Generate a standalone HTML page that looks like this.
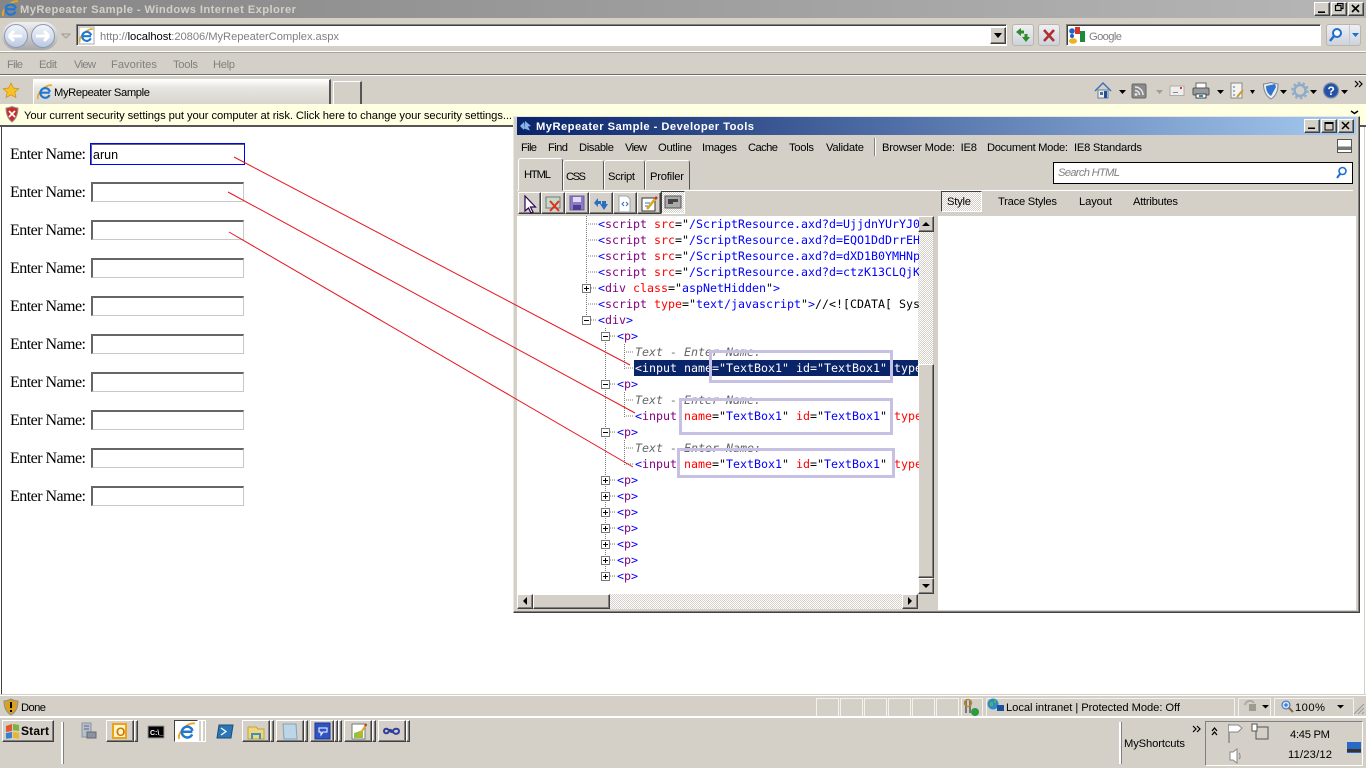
<!DOCTYPE html>
<html><head><meta charset="utf-8"><title>MyRepeater Sample</title>
<style>
html,body{margin:0;padding:0;width:1366px;height:768px;overflow:hidden;background:#d4d0c8}
div{position:absolute;box-sizing:border-box}
.up{background:#d4d0c8;border:1px solid;border-color:#fff #404040 #404040 #fff;box-shadow:inset -1px -1px 0 #808080}
.in{background:#fff;border:1px solid;border-color:#808080 #fff #fff #808080;box-shadow:inset 1px 1px 0 #404040}
.tb{border-radius:3px;border:1px solid #b9b6ae;background:linear-gradient(#eef0f3,#cdd3dc)}
.ip{background:#fff;border-style:solid;border-width:2px 1px 1px 2px;border-color:#666 #c8c8c8 #c8c8c8 #666;left:91px;width:153px;height:20px}
.dith{background-color:#fff;background-image:conic-gradient(#d4d0c8 25%,transparent 0 50%,#d4d0c8 0 75%,transparent 0);background-size:2px 2px}
.sb{border:1px solid #f4f2ee;height:20px;top:698px;width:23px}
svg{position:absolute;left:0;top:0}
text{font-family:"Liberation Sans",sans-serif;font-size:11.2px;fill:#000;white-space:pre}
.g{fill:#808080}
.m{font-family:"DejaVu Sans Mono",monospace;font-size:11.63px}
.s{font-family:"Liberation Serif",serif;font-size:16px}
.bl{fill:#00f}.pu{fill:#800080}.r{fill:#f00}
</style></head><body>

<!-- IE title bar -->
<div style="left:0;top:0;width:1366px;height:18px;background:linear-gradient(90deg,#868686,#b6b6b6)"></div>
<div class="up" style="left:1314px;top:2px;width:16px;height:14px"></div>
<div class="up" style="left:1331px;top:2px;width:16px;height:14px"></div>
<div class="up" style="left:1348px;top:2px;width:16px;height:14px"></div>

<!-- Nav row -->
<div style="left:2px;top:22px;width:56px;height:28px;border-radius:14px;background:linear-gradient(#f0f0f0,#a8a8a8)"></div>
<div style="left:4px;top:24px;width:24px;height:24px;border-radius:12px;background:linear-gradient(#f2f5fb,#bcc9e2);border:1px solid #8d9ab4"></div>
<div style="left:31px;top:24px;width:24px;height:24px;border-radius:12px;background:linear-gradient(#f2f5fb,#bcc9e2);border:1px solid #8d9ab4"></div>
<div class="in" style="left:76px;top:24px;width:931px;height:22px"></div>
<div class="up" style="left:990px;top:27px;width:16px;height:17px"></div>
<div class="tb" style="left:1012px;top:24px;width:22px;height:22px"></div>
<div class="tb" style="left:1038px;top:24px;width:22px;height:22px"></div>
<div class="in" style="left:1066px;top:24px;width:255px;height:22px"></div>
<div class="tb" style="left:1326px;top:24px;width:35px;height:22px"></div>
<div style="left:1349px;top:25px;width:1px;height:20px;background:#c3c7cf"></div>
<div style="left:0;top:51px;width:1366px;height:2px;background:linear-gradient(#fff 50%,#a8a59e 50%)"></div>

<!-- Menu -->
<div style="left:0;top:74px;width:1366px;height:2px;background:linear-gradient(#6f6f6f 50%,#fff 50%)"></div>

<!-- Tabs -->
<div style="left:33px;top:79px;width:298px;height:25px;background:linear-gradient(#fff,#e8e6e1 30%,#d8d5ce);border-top:1px solid #fff;border-left:1px solid #fff;border-right:2px solid #555"></div>
<div style="left:333px;top:81px;width:29px;height:23px;border-top:1px solid #fff;border-left:1px solid #fff;border-right:2px solid #555"></div>

<!-- Info bar -->
<div style="left:0;top:104px;width:1366px;height:21px;background:#ffffe1"></div>
<div style="left:0;top:125px;width:1366px;height:2px;background:#555"></div>

<!-- Page -->
<div style="left:0;top:127px;width:1366px;height:567px;background:#fff"></div>
<div style="left:1px;top:127px;width:1px;height:567px;background:#404040"></div>
<div style="left:1364px;top:127px;width:1px;height:567px;background:#d4d0c8"></div>
<div class="ip" style="left:90px;top:143px;width:155px;height:22px;border:1px solid #00f;box-shadow:inset 1px 1px 0 #666"></div>
<div class="ip" style="top:182px"></div>
<div class="ip" style="top:220px"></div>
<div class="ip" style="top:258px"></div>
<div class="ip" style="top:296px"></div>
<div class="ip" style="top:334px"></div>
<div class="ip" style="top:372px"></div>
<div class="ip" style="top:410px"></div>
<div class="ip" style="top:448px"></div>
<div class="ip" style="top:486px"></div>

<!-- Status -->
<div style="left:0;top:694px;width:1366px;height:3px;background:linear-gradient(#d4d0c8 33%,#fff 33% 66%,#d4d0c8 66%)"></div>
<div class="sb" style="left:816px"></div><div class="sb" style="left:840px"></div><div class="sb" style="left:864px"></div><div class="sb" style="left:888px"></div><div class="sb" style="left:912px"></div><div class="sb" style="left:936px"></div>
<div class="sb" style="left:961px;width:22px"></div>
<div class="sb" style="left:986px;width:249px"></div>
<div class="sb" style="left:1238px;width:33px"></div>
<div class="sb" style="left:1274px;width:80px"></div>
<div style="left:0;top:716px;width:1366px;height:2px;background:#fff"></div>

<!-- Taskbar -->
<div class="up" style="left:2px;top:720px;width:52px;height:22px"></div>
<div style="left:61px;top:722px;width:3px;height:42px;background:#fff;border-right:1px solid #808080"></div>
<div class="up" style="left:106px;top:720px;width:28px;height:22px"></div><div class="up" style="left:134px;top:720px;width:4px;height:22px"></div>
<div style="left:174px;top:720px;width:24px;height:22px;background:#fff;border:1px solid;border-color:#404040 #fff #fff #404040"></div>
<div style="left:198px;top:720px;width:4px;height:22px;border:1px solid #fff"></div><div style="left:202px;top:720px;width:4px;height:22px;border:1px solid #fff"></div>
<div class="up" style="left:242px;top:720px;width:28px;height:22px"></div><div class="up" style="left:270px;top:720px;width:4px;height:22px"></div>
<div class="up" style="left:276px;top:720px;width:28px;height:22px"></div><div class="up" style="left:304px;top:720px;width:4px;height:22px"></div>
<div class="up" style="left:310px;top:720px;width:24px;height:22px"></div><div class="up" style="left:334px;top:720px;width:4px;height:22px"></div><div class="up" style="left:338px;top:720px;width:4px;height:22px"></div>
<div class="up" style="left:344px;top:720px;width:28px;height:22px"></div><div class="up" style="left:372px;top:720px;width:4px;height:22px"></div>
<div class="up" style="left:378px;top:720px;width:28px;height:22px"></div><div class="up" style="left:406px;top:720px;width:4px;height:22px"></div>
<div style="left:1119px;top:722px;width:3px;height:42px;background:#fff;border-right:1px solid #808080"></div>
<div style="left:1205px;top:721px;width:158px;height:45px;border:1px solid;border-color:#808080 #fff #fff #808080"></div>

<!-- Developer Tools window -->
<div style="left:513px;top:116px;width:847px;height:497px;background:#d4d0c8;border:1px solid;border-color:#e8e6e1 #404040 #404040 #e8e6e1;box-shadow:inset -1px -1px 0 #808080"></div>
<div style="left:517px;top:117px;width:839px;height:18px;background:linear-gradient(90deg,#0a246a,#a6caf0)"></div>
<div class="up" style="left:1304px;top:119px;width:16px;height:14px"></div>
<div class="up" style="left:1321px;top:119px;width:16px;height:14px"></div>
<div class="up" style="left:1338px;top:119px;width:16px;height:14px"></div>
<div style="left:874px;top:138px;width:2px;height:18px;background:linear-gradient(90deg,#808080 50%,#fff 50%)"></div>
<div style="left:1337px;top:139px;width:15px;height:14px;border:1px solid #555;background:linear-gradient(#fff 55%,#777 55%,#777 85%,#fff 85%)"></div>

<div style="left:517px;top:190px;width:422px;height:1px;background:#fff"></div>
<div style="left:939px;top:190px;width:414px;height:1px;background:#fff"></div>
<div style="left:518px;top:158px;width:45px;height:33px;background:#d4d0c8;border:1px solid;border-color:#fff #555 #d4d0c8 #fff;border-radius:3px 3px 0 0"></div>
<div style="left:563px;top:160px;width:41px;height:30px;border:1px solid;border-color:#fff #555 #d4d0c8 #fff;border-radius:3px 3px 0 0"></div>
<div style="left:604px;top:160px;width:41px;height:30px;border:1px solid;border-color:#fff #555 #d4d0c8 #fff;border-radius:3px 3px 0 0"></div>
<div style="left:645px;top:160px;width:45px;height:30px;border:1px solid;border-color:#fff #555 #d4d0c8 #fff;border-radius:3px 3px 0 0"></div>
<div style="left:1053px;top:162px;width:300px;height:22px;background:#fff;border:1px solid #000"></div>

<div class="up" style="left:518px;top:192px;width:23px;height:22px"></div>
<div class="up" style="left:541px;top:192px;width:24px;height:22px"></div>
<div class="up" style="left:565px;top:192px;width:24px;height:22px"></div>
<div class="up" style="left:589px;top:192px;width:24px;height:22px"></div>
<div class="up" style="left:613px;top:192px;width:24px;height:22px"></div>
<div class="up" style="left:637px;top:192px;width:24px;height:22px"></div>
<div class="dith" style="left:661px;top:191px;width:24px;height:23px;border:1px solid;border-color:#404040 #fff #fff #404040"></div>

<div class="dith" style="left:941px;top:191px;width:41px;height:21px;border:1px solid;border-color:#404040 #fff #fff #404040"></div>

<div style="left:517px;top:216px;width:402px;height:378px;background:#fff"></div>
<div style="left:938px;top:216px;width:418px;height:394px;background:#fff"></div>

<div style="left:634px;top:360px;width:284px;height:16px;background:#0a246a"></div>

<!-- Scrollbars -->
<div class="dith" style="left:918px;top:232px;width:15px;height:346px"></div>
<div class="up" style="left:918px;top:216px;width:16px;height:16px"></div>
<div class="up" style="left:918px;top:364px;width:16px;height:214px"></div>
<div class="up" style="left:918px;top:578px;width:16px;height:16px"></div>
<div class="dith" style="left:517px;top:594px;width:401px;height:15px"></div>
<div class="up" style="left:517px;top:594px;width:16px;height:15px"></div>
<div class="up" style="left:533px;top:594px;width:77px;height:15px"></div>
<div class="up" style="left:902px;top:594px;width:16px;height:15px"></div>

<svg width="1366" height="768" viewBox="0 0 1366 768">
<defs>
<symbol id="ie" viewBox="0 0 16 16">
<path d="M1.500 14.800C-.5 14 1.500 9 5 5.500S13 .5 15 1.500" fill="none" stroke="#efa81a" stroke-width="1.700"/>
<path d="M4.500 8.700h8.300M12.600 11a4.800 4.800 0 1 1 .3-3.200" fill="none" stroke="#2178d4" stroke-width="2.200"/>
</symbol>
<symbol id="plus" viewBox="0 0 9 9"><rect x=".5" y=".5" width="8" height="8" fill="#fff" stroke="#777"/><path d="M2 4.500h5M4.500 2v5" stroke="#000"/></symbol>
<symbol id="minus" viewBox="0 0 9 9"><rect x=".5" y=".5" width="8" height="8" fill="#fff" stroke="#777"/><path d="M2 4.500h5" stroke="#000"/></symbol>
<clipPath id="cl"><rect x="517" y="216" width="402" height="378"/></clipPath>
</defs>

<!-- IE titlebar -->
<use href="#ie" x="2" y="0" width="17" height="17"/>
<text x="20" y="13" font-weight="bold" textLength="276" style="fill:#d4d0c8">MyRepeater Sample - Windows Internet Explorer</text>
<path d="M1318 13h7v-1.600h-7z" fill="#000"/>
<path d="M1335.500 5.500h5.500v5h-5.500zM1337.500 5.500v-2h5.500v5h-2" fill="none" stroke="#000" stroke-width="1.200"/>
<path d="M1352 5l7 7M1359 5l-7 7" stroke="#000" stroke-width="1.600"/>

<!-- Back / forward -->
<path d="M9 36h13M9 36l5-5M9 36l5 5" stroke="#fff" stroke-width="3" fill="none"/>
<path d="M36 36h13M49 36l-5-5M49 36l-5 5" stroke="#fff" stroke-width="3" fill="none"/>
<path d="M62 34h8l-4 4z" fill="#d4d0c8" stroke="#a09c94"/>
<rect x="79" y="27" width="15" height="17" fill="#fff" stroke="#aaa"/>
<use href="#ie" x="79" y="28" width="15" height="15"/>
<text x="100" y="40" class="g" textLength="239"><tspan class="g">http://</tspan><tspan style="fill:#000">localhost</tspan><tspan class="g">:20806/MyRepeaterComplex.aspx</tspan></text>
<path d="M994 33h8l-4 5z" fill="#000"/>
<path d="M1016 32l5-4v2.500h3v3h-3v2.500zM1030 37l-4 5-4-5h2.500v-3h3v3z" fill="#2f8a2a"/>
<path d="M1044 30l10 11M1054 30l-10 11" stroke="#b03030" stroke-width="2.600"/>
<rect x="1068" y="27" width="18" height="18" fill="#fff"/>
<circle cx="1072" cy="31" r="2.800" fill="#1f63c9"/><rect x="1075" y="27" width="5" height="7" fill="#d8322b"/><rect x="1080" y="31" width="5" height="11" fill="#1b8a3a"/><ellipse cx="1073" cy="41" rx="4" ry="2.800" fill="#eeb221"/><circle cx="1072" cy="36" r="2" fill="#1f63c9"/>
<text x="1089" y="40" class="g" textLength="33">Google</text>
<circle cx="1337" cy="33" r="4" fill="#fff" stroke="#1c6fd1" stroke-width="2"/><path d="M1334 36l-4 5" stroke="#1c6fd1" stroke-width="2.400"/>
<path d="M1352 33h7l-3.500 4z" fill="#1c6fd1"/>

<!-- Menu -->
<text x="7" y="68" class="g" textLength="16">File</text><text x="39" y="68" class="g" textLength="18">Edit</text><text x="74" y="68" class="g" textLength="22">View</text><text x="111" y="68" class="g" textLength="46">Favorites</text><text x="173" y="68" class="g" textLength="25">Tools</text><text x="213" y="68" class="g" textLength="22">Help</text>

<!-- Tab row -->
<path d="M11 83l2.400 5 5.400.600-4 3.600 1.200 5.400-5-2.800-5 2.800 1.200-5.400-4-3.600 5.400-.6z" fill="#f7c326" stroke="#c98f14" stroke-width=".7"/>
<use href="#ie" x="37" y="84" width="16" height="16"/>
<text x="54" y="96" textLength="96">MyRepeater Sample</text>

<!-- Right toolbar icons -->
<path d="M1095 91l8-8 8 8" fill="none" stroke="#3a6fb8" stroke-width="1.400"/><path d="M1098 90h10v8h-10z" fill="#f0efe8" stroke="#6b7b94"/><rect x="1100" y="92" width="3" height="3" fill="#3a6fb8"/><rect x="1104" y="91" width="3" height="7" fill="#1f4f98"/>
<path d="M1119 90h7l-3.500 4z" fill="#000"/>
<rect x="1132" y="84" width="14" height="14" rx="1.500" fill="#8a8a8a" stroke="#666"/><path d="M1135 87a8 8 0 0 1 8 8M1135 90.500a4.500 4.500 0 0 1 4.500 4.500" stroke="#e8e8e8" stroke-width="1.500" fill="none"/><circle cx="1136" cy="94.500" r="1.400" fill="#e8e8e8"/>
<path d="M1156 90h7l-3.500 4z" fill="#a09c94"/>
<rect x="1170" y="86" width="14" height="9.500" fill="#eee" stroke="#b0aca4"/><path d="M1173 92.500h5" stroke="#888"/><rect x="1180" y="87" width="2" height="2" fill="#d33"/>
<rect x="1196" y="83" width="10" height="6" fill="#fff" stroke="#666"/><rect x="1193" y="88" width="16" height="7" rx="1" fill="#9a9a9a" stroke="#555"/><rect x="1196" y="94" width="10" height="4" fill="#fff" stroke="#444"/><rect x="1199" y="95" width="4" height="2" fill="#2a8ab0"/>
<path d="M1217 90h7l-3.500 4z" fill="#000"/>
<rect x="1231" y="83" width="11" height="15" fill="#f4f3ee" stroke="#8a8a8a"/><path d="M1233 87h2M1233 91h2M1233 95h2" stroke="#3a6fb8"/><path d="M1237 97l6-7" stroke="#c99a2e" stroke-width="2"/>
<path d="M1250 90h5l-2.500 4z" fill="#000"/>
<path d="M1263.500 84c3 0 5-1 7.500-1.500 2.500.5 4.500 1.500 7 1.500 0 7-2 12-7 15-5-3-7.500-8-7.500-15z" fill="#eee" stroke="#7d8794"/><path d="M1266 86l9-2 1 3-5 9c-3-2-5-5-5-10z" fill="#2f74cf"/>
<path d="M1280 90h7l-3.500 4z" fill="#000"/>
<circle cx="1300" cy="90.500" r="5.500" fill="none" stroke="#8eabc8" stroke-width="2.500"/><circle cx="1300" cy="90.500" r="7.800" fill="none" stroke="#8eabc8" stroke-width="2" stroke-dasharray="2.500 2.400"/>
<path d="M1310 90h7l-3.500 4z" fill="#000"/>
<circle cx="1331" cy="90.500" r="7.500" fill="#2452a8" stroke="#7e8ea8" stroke-width="1.200"/><text x="1327.500" y="95" font-weight="bold" style="fill:#fff;font-size:12px">?</text>
<path d="M1341 90h7l-3.500 4z" fill="#000"/>
<path d="M1355 81l3 3-3 3M1359 81l3 3-3 3" fill="none" stroke="#000" stroke-width="1.200"/>

<!-- Info bar -->
<path d="M6 108c2 0 4-1 6-1.500 2 .5 4 1.500 6 1.500 0 6-2 11-6 14-4-3-6-8-6-14z" fill="#c72d2d" stroke="#999"/><path d="M9 111l6 6M15 111l-6 6" stroke="#fff" stroke-width="1.600"/>
<text x="24" y="119" textLength="488">Your current security settings put your computer at risk. Click here to change your security settings...</text>
<path d="M1351 111l3.500 2.500 3.500-2.500" fill="none" stroke="#000" stroke-width="1.500"/>

<!-- Page text -->
<text x="10" y="159" class="s" textLength="76">Enter Name:</text>
<text x="10" y="197" class="s" textLength="76">Enter Name:</text>
<text x="10" y="235" class="s" textLength="76">Enter Name:</text>
<text x="10" y="273" class="s" textLength="76">Enter Name:</text>
<text x="10" y="311" class="s" textLength="76">Enter Name:</text>
<text x="10" y="349" class="s" textLength="76">Enter Name:</text>
<text x="10" y="387" class="s" textLength="76">Enter Name:</text>
<text x="10" y="425" class="s" textLength="76">Enter Name:</text>
<text x="10" y="463" class="s" textLength="76">Enter Name:</text>
<text x="10" y="501" class="s" textLength="76">Enter Name:</text>
<text x="93" y="159" style="font-size:12.5px">arun</text>

<!-- DevTools title -->
<path d="M520 126l4-4v8zM525 121l6 5-3 .5 2 4-6-2z" fill="#8ab4e8"/>
<text x="536" y="130" font-weight="bold" textLength="218" style="fill:#fff">MyRepeater Sample - Developer Tools</text>
<path d="M1308 129h7v-1.500h-7z" fill="#000"/>
<path d="M1325 122.500h8v7.500h-8zM1325 123.500h8" fill="none" stroke="#000"/>
<path d="M1342 122l7 7M1349 122l-7 7" stroke="#000" stroke-width="1.500"/>

<!-- DevTools menu -->
<text x="521" y="151" textLength="16">File</text><text x="548" y="151" textLength="20">Find</text><text x="579" y="151" textLength="35">Disable</text><text x="625" y="151" textLength="22">View</text><text x="658" y="151" textLength="34">Outline</text><text x="702" y="151" textLength="35">Images</text><text x="748" y="151" textLength="30">Cache</text><text x="789" y="151" textLength="25">Tools</text><text x="826" y="151" textLength="38">Validate</text>
<text x="882" y="151" textLength="95">Browser Mode:  IE8</text><text x="987" y="151" textLength="81">Document Mode:</text><text x="1074" y="151" textLength="68">IE8 Standards</text>
<text x="524" y="178" textLength="27">HTML</text><text x="566" y="180" textLength="20">CSS</text><text x="608" y="180" textLength="27">Script</text><text x="650" y="180" textLength="34">Profiler</text>
<text x="1058" y="176" class="g" font-style="italic" textLength="62">Search HTML</text>
<circle cx="1342.500" cy="171" r="3.500" fill="#fff" stroke="#1c6fd1" stroke-width="1.600"/><path d="M1340 174l-3 4" stroke="#1c6fd1" stroke-width="2"/>

<!-- DevTools toolbar icons -->
<path d="M525 196v15l3.500-3 2.500 5 2-1-2.500-5h5z" fill="#fff" stroke="#300050" stroke-width="1.200"/>
<rect x="546" y="197" width="14" height="11" fill="#c3dbc8" stroke="#777"/><path d="M550 201l9 10M559 201l-9 10" stroke="#e03020" stroke-width="2"/>
<path d="M570 196h14v14h-14z" fill="#8a7cc4" stroke="#6a5ca4"/><rect x="573" y="197" width="8" height="5" fill="#e0dcf4"/><rect x="573" y="205" width="8" height="5" fill="#4c3e90"/>
<path d="M594 203l4-5v3h3v3h-3v3zM608 204l-4 6-4-6h2v-3h4v3z" fill="#2a6fc0"/>
<path d="M619 196h8l3 3v13h-11z" fill="#fff" stroke="#9aa"/><path d="M624 202l-2 2 2 2M626 202l2 2-2 2" fill="none" stroke="#2a6fc0"/>
<rect x="642" y="198" width="13" height="13" fill="#fff" stroke="#333"/><path d="M645 203h5M645 206h4" stroke="#3a6fb8"/><path d="M647 209l9-11" stroke="#d9a928" stroke-width="2.600"/><path d="M655 199l2-2" stroke="#c03030" stroke-width="2.600"/>
<rect x="665" y="196" width="16" height="12" fill="#aaa" stroke="#555"/><path d="M668 199h10v3h-5v2h-5z" fill="#444"/>

<text x="947" y="205" textLength="24">Style</text>
<text x="998" y="205" textLength="59">Trace Styles</text>
<text x="1079" y="205" textLength="33">Layout</text>
<text x="1133" y="205" textLength="45">Attributes</text>

<!-- Tree lines -->
<g stroke="#777" stroke-dasharray="1 1" fill="none">
<path d="M586.500 216v100M605.500 328v248"/>
<path d="M588 224h9M588 240h9M588 256h9M588 272h9M591 288h6M588 304h9M591 320h6M610 336h6M610 384h6M610 432h6M610 480h6M610 496h6M610 512h6M610 528h6M610 544h6M610 560h6M610 576h6"/>
<path d="M624.500 344v25M624.500 392v25M624.500 440v25M626 352h8M626 368h8M626 400h8M626 416h8M626 448h8M626 464h8"/>
</g>
<use href="#plus" x="582" y="284" width="9" height="9"/>
<use href="#minus" x="582" y="316" width="9" height="9"/>
<use href="#minus" x="601" y="332" width="9" height="9"/>
<use href="#minus" x="601" y="380" width="9" height="9"/>
<use href="#minus" x="601" y="428" width="9" height="9"/>
<use href="#plus" x="601" y="476" width="9" height="9"/>
<use href="#plus" x="601" y="492" width="9" height="9"/>
<use href="#plus" x="601" y="508" width="9" height="9"/>
<use href="#plus" x="601" y="524" width="9" height="9"/>
<use href="#plus" x="601" y="540" width="9" height="9"/>
<use href="#plus" x="601" y="556" width="9" height="9"/>
<use href="#plus" x="601" y="572" width="9" height="9"/>

<!-- Code -->
<g clip-path="url(#cl)">
<text x="598" y="228" class="m"><tspan class="bl">&lt;</tspan><tspan class="pu">script</tspan> <tspan class="r">src</tspan>="<tspan class="bl">/ScriptResource.axd?d=UjjdnYUrYJ0</tspan></text>
<text x="598" y="244" class="m"><tspan class="bl">&lt;</tspan><tspan class="pu">script</tspan> <tspan class="r">src</tspan>="<tspan class="bl">/ScriptResource.axd?d=EQO1DdDrrEH</tspan></text>
<text x="598" y="260" class="m"><tspan class="bl">&lt;</tspan><tspan class="pu">script</tspan> <tspan class="r">src</tspan>="<tspan class="bl">/ScriptResource.axd?d=dXD1B0YMHNp</tspan></text>
<text x="598" y="276" class="m"><tspan class="bl">&lt;</tspan><tspan class="pu">script</tspan> <tspan class="r">src</tspan>="<tspan class="bl">/ScriptResource.axd?d=ctzK13CLQjK</tspan></text>
<text x="598" y="292" class="m"><tspan class="bl">&lt;</tspan><tspan class="pu">div</tspan> <tspan class="r">class</tspan>="<tspan class="bl">aspNetHidden</tspan>"<tspan class="bl">&gt;</tspan></text>
<text x="598" y="308" class="m"><tspan class="bl">&lt;</tspan><tspan class="pu">script</tspan> <tspan class="r">type</tspan>="<tspan class="bl">text/javascript</tspan>"<tspan class="bl">&gt;</tspan>//&lt;![CDATA[ Sys</text>
<text x="598" y="324" class="m"><tspan class="bl">&lt;</tspan><tspan class="pu">div</tspan><tspan class="bl">&gt;</tspan></text>
<text x="617" y="340" class="m"><tspan class="bl">&lt;</tspan><tspan class="pu">p</tspan><tspan class="bl">&gt;</tspan></text>
<text x="635" y="356" class="m" font-style="italic" style="fill:#666">Text - Enter Name:</text>
<text x="635" y="372" class="m" style="fill:#fff">&lt;input name="TextBox1" id="TextBox1" type</text>
<text x="617" y="388" class="m"><tspan class="bl">&lt;</tspan><tspan class="pu">p</tspan><tspan class="bl">&gt;</tspan></text>
<text x="635" y="404" class="m" font-style="italic" style="fill:#666">Text - Enter Name:</text>
<text x="635" y="420" class="m"><tspan class="bl">&lt;</tspan><tspan class="pu">input</tspan> <tspan class="r">name</tspan>="<tspan class="bl">TextBox1</tspan>" <tspan class="r">id</tspan>="<tspan class="bl">TextBox1</tspan>" <tspan class="r">type</tspan></text>
<text x="617" y="436" class="m"><tspan class="bl">&lt;</tspan><tspan class="pu">p</tspan><tspan class="bl">&gt;</tspan></text>
<text x="635" y="452" class="m" font-style="italic" style="fill:#666">Text - Enter Name:</text>
<text x="635" y="468" class="m"><tspan class="bl">&lt;</tspan><tspan class="pu">input</tspan> <tspan class="r">name</tspan>="<tspan class="bl">TextBox1</tspan>" <tspan class="r">id</tspan>="<tspan class="bl">TextBox1</tspan>" <tspan class="r">type</tspan></text>
<text x="617" y="484" class="m"><tspan class="bl">&lt;</tspan><tspan class="pu">p</tspan><tspan class="bl">&gt;</tspan></text>
<text x="617" y="500" class="m"><tspan class="bl">&lt;</tspan><tspan class="pu">p</tspan><tspan class="bl">&gt;</tspan></text>
<text x="617" y="516" class="m"><tspan class="bl">&lt;</tspan><tspan class="pu">p</tspan><tspan class="bl">&gt;</tspan></text>
<text x="617" y="532" class="m"><tspan class="bl">&lt;</tspan><tspan class="pu">p</tspan><tspan class="bl">&gt;</tspan></text>
<text x="617" y="548" class="m"><tspan class="bl">&lt;</tspan><tspan class="pu">p</tspan><tspan class="bl">&gt;</tspan></text>
<text x="617" y="564" class="m"><tspan class="bl">&lt;</tspan><tspan class="pu">p</tspan><tspan class="bl">&gt;</tspan></text>
<text x="617" y="580" class="m"><tspan class="bl">&lt;</tspan><tspan class="pu">p</tspan><tspan class="bl">&gt;</tspan></text>
</g>

<!-- Scroll arrows -->
<path d="M922 226h8l-4-4z" fill="#000"/>
<path d="M922 584h8l-4 4z" fill="#000"/>
<path d="M527 597v8l-4-4z" fill="#000"/>
<path d="M908 597v8l4-4z" fill="#000"/>

<!-- Annotations -->
<rect x="710.500" y="351.500" width="181" height="30" fill="none" stroke="#c5c0e4" stroke-width="3"/>
<rect x="680.500" y="399.500" width="211" height="34" fill="none" stroke="#c5c0e4" stroke-width="3"/>
<rect x="678.500" y="449.500" width="215" height="27" fill="none" stroke="#c5c0e4" stroke-width="3"/>
<path d="M234 157L630 365M228 192L635 413M229 232L633 467" stroke="#e8141e" stroke-width="1" fill="none"/>

<!-- Status bar -->
<path d="M4 701c2.500 0 5-1 7-2 2 1 4.500 2 7 2 0 6-2 11-7 14-5-3-7-8-7-14z" fill="#d9a21e" stroke="#8d8d8d"/><rect x="10" y="702" width="2" height="6" fill="#000"/><rect x="10" y="710" width="2" height="2" fill="#000"/>
<text x="21" y="711" textLength="25">Done</text>
<path d="M966 700v13M970 700v13" stroke="#777" stroke-width="2"/><circle cx="968" cy="703" r="3.500" fill="none" stroke="#b88a2c" stroke-width="1.500"/><circle cx="975" cy="712" r="4" fill="#2c9a40"/>
<circle cx="993" cy="704" r="5.500" fill="#2a8ccf"/><path d="M990 702h3v4h-3zM994 700h2v3h-2z" fill="#5bb04c"/><rect x="997" y="705" width="7" height="6" fill="#1f4f98"/>
<text x="1006" y="711" textLength="174">Local intranet | Protected Mode: Off</text>
<path d="M1245 705a5 5 0 0 1 9-2" fill="none" stroke="#aaa" stroke-width="2"/><rect x="1249" y="704" width="7" height="7" fill="#9d9a93"/>
<path d="M1262 705h7l-3.500 3.500z" fill="#000"/>
<circle cx="1286" cy="705" r="4" fill="#cfe0f6" stroke="#2a6fc0"/><path d="M1289 708l4 4" stroke="#8a6a3a" stroke-width="2"/><path d="M1284 705h4M1286 703v4" stroke="#1c5fb8"/>
<text x="1295" y="711" textLength="30">100%</text>
<path d="M1337 705h7l-3.500 3.500z" fill="#000"/>
<path d="M1354 714l10-10M1358 714l6-6M1362 714l2-2" stroke="#999"/>

<!-- Taskbar content -->
<path d="M6 726l6-2v7l-6 1z" fill="#e2572b"/><path d="M13 724l6 1v6l-6-.8z" fill="#7fb23c"/><path d="M6 733l6-1v6l-6 .8z" fill="#3a7fd0"/><path d="M13 732l6 .8v6l-6-1z" fill="#e9b52a"/>
<text x="21" y="735" font-weight="bold" textLength="28" style="font-size:12px">Start</text>
<path d="M82 723h9v14h-9z" fill="#b5c0cc" stroke="#8a95a0"/><path d="M84 726h5M84 729h5" stroke="#667"/><rect x="87" y="732" width="9" height="6" fill="#8a94a0" stroke="#667"/>
<rect x="112" y="723" width="15" height="16" fill="#efa313"/><rect x="114" y="725" width="11" height="12" fill="#fff3c8"/><text x="116" y="736" font-weight="bold" style="fill:#c77a08;font-size:12px">O</text>
<rect x="148" y="726" width="16" height="12" fill="#000" stroke="#999"/><text x="150" y="735" font-weight="bold" style="fill:#fff;font-size:7px">C:\_</text>
<use href="#ie" x="178" y="722" width="18" height="18"/>
<path d="M219 725h14l-2 13h-14z" fill="#2b76b8" stroke="#1a4d7a"/><path d="M221 728l5 3.500-5 3.500" fill="none" stroke="#fff" stroke-width="1.300"/>
<path d="M248 727h8l2 2h6v10h-16z" fill="#f0d679" stroke="#c0a24a"/><path d="M252 739v-5h8v5" fill="none" stroke="#3a8fc4" stroke-width="2"/>
<path d="M283 724h13l1 15h-13z" fill="#bcd6e8" stroke="#7ea4bc"/>
<rect x="315" y="723" width="15" height="16" fill="#2f55c4" stroke="#1b358c"/><path d="M319 728h8v4h-4l-2 3v-3h-2z" fill="none" stroke="#fff"/>
<rect x="352" y="724" width="13" height="15" fill="#fff" stroke="#777"/><path d="M354 733l9-3v8h-9z" fill="#8cc63f"/><path d="M358 737l8-12" stroke="#d9a928" stroke-width="2"/><path d="M365 726l1.500-2" stroke="#c03030" stroke-width="2"/>
<path d="M389 731c-1-3-5-3-5 0s4 3 5 0 4 1 4 1c2 3 6 2 6-1s-5-3-6 0-3-1-4 0z" fill="none" stroke="#30409c" stroke-width="2"/>

<text x="1124" y="747" textLength="61">MyShortcuts</text>
<path d="M1193 726l3 3-3 3M1197 726l3 3-3 3" fill="none" stroke="#000" stroke-width="1.200"/>
<path d="M1212 731l2.500-3 2.500 3M1212 735l2.500-3 2.500 3" fill="none" stroke="#000" stroke-width="1.300"/>
<path d="M1229 724v19" stroke="#666"/><path d="M1229 725h9l4 3-4 4h-9" fill="#fff" stroke="#888"/>
<rect x="1256" y="727" width="12" height="12" fill="#d4d0c8" stroke="#555"/><rect x="1252" y="724" width="5" height="7" fill="#fff" stroke="#555"/>
<path d="M1230 752h3l4-3v14l-4-3h-3z" fill="#fff" stroke="#888"/><path d="M1239 753c1.500 1.500 1.500 5 0 6" fill="none" stroke="#888"/>
<text x="1290" y="738" textLength="40">4:45 PM</text>
<text x="1288" y="758" textLength="44">11/23/12</text>
<rect x="1347" y="742" width="14" height="11" fill="#2a68c8"/><rect x="1347" y="749" width="14" height="3" fill="#333"/>
</svg>
</body></html>
